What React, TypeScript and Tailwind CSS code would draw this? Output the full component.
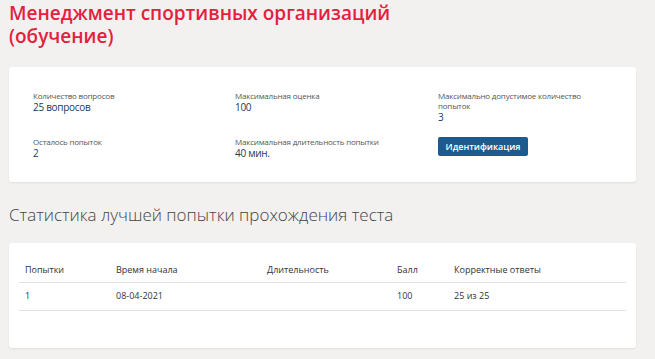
const info = [
  { label: "Количество вопросов", value: "25 вопросов" },
  { label: "Максимальная оценка", value: "100" },
  { label: "Максимально допустимое количество попыток", value: "3" },
  { label: "Осталось попыток", value: "2" },
  { label: "Максимальная длительность попытки", value: "40 мин." },
];

const cols = ["Попытки", "Время начала", "Длительность", "Балл", "Корректные ответы"];
const row = ["1", "08-04-2021", "", "100", "25 из 25"];
const widths = ["w-[91px]", "w-[151px]", "w-[130px]", "w-[57px]", ""];

function Field({ label, value }: { label: string; value: string }) {
  return (
    <div>
      <p className="text-[8px] leading-[10px] tracking-[-0.2px] text-[#555]">{label}</p>
      <p className="text-[10px] leading-[12px] tracking-[-0.3px] text-[#1b3a5c]">{value}</p>
    </div>
  );
}

export default function App() {
  return (
    <div className="min-h-[359px] bg-[#f2f1f0] px-[9px] pb-4 pt-[2px] font-['Open_Sans',sans-serif]">
      <h1 className="w-[420px] text-[19px] font-semibold leading-[23px] text-[#e3213d]">
        Менеджмент спортивных организаций (обучение)
      </h1>

      {/* test summary */}
      <div className="mt-[19px] h-[115px] w-[627px] rounded-[3px] bg-white px-6 pt-[24px] shadow-[0_1px_2px_rgba(0,0,0,0.08)]">
        <div className="grid grid-cols-[202px_203px_1fr]">
          <Field {...info[0]} />
          <Field {...info[1]} />
          <div className="w-[160px]">
            <Field {...info[2]} />
          </div>
        </div>
        <div className="mt-[14px] grid grid-cols-[202px_203px_1fr]">
          <Field {...info[3]} />
          <Field {...info[4]} />
          <div className="flex items-start">
            <button className="block h-[19px] w-[90px] rounded-[2px] bg-[#1d5a8e] text-[9px] font-semibold leading-[19px] text-white">
              Идентификация
            </button>
          </div>
        </div>
      </div>

      <h2 className="mt-[21px] text-[17px] font-light leading-[24px] text-[#444]">
        Статистика лучшей попытки прохождения теста
      </h2>

      {/* best attempt */}
      <div className="mt-[16px] h-[105px] w-[627px] rounded-[3px] bg-white px-[10px] pt-[14px] shadow-[0_1px_2px_rgba(0,0,0,0.08)]">
        <table className="w-full text-left text-[9px] text-[#333]">
          <thead>
            <tr className="border-b border-[#e2e2e2]">
              {cols.map((c, i) => (
                <th key={c} className={`h-[25px] px-[6px] font-normal ${widths[i]}`}>
                  {c}
                </th>
              ))}
            </tr>
          </thead>
          <tbody>
            <tr className="border-b border-[#e2e2e2]">
              {row.map((c, i) => (
                <td key={i} className="h-[28px] px-[6px]">
                  {c}
                </td>
              ))}
            </tr>
          </tbody>
        </table>
      </div>
    </div>
  );
}
